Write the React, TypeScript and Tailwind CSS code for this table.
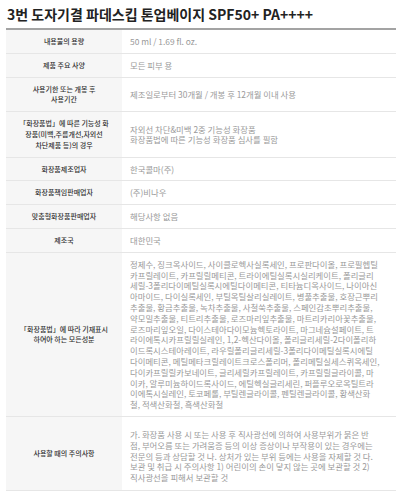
const rows: { label: string[]; value: string[]; tall?: boolean }[] = [
  { label: ["내용물의 용량"], value: ["50 ml / 1.69 fl. oz."] },
  { label: ["제품 주요 사양"], value: ["모든 피부 용"] },
  { label: ["사용기한 또는 개봉 후", "사용기간"], value: ["제조일로부터 30개월 / 개봉 후 12개월 이내 사용"] },
  {
    label: ["「화장품법」에 따른 기능성 화", "장품(미백,주름개선,자외선", "차단제품 등)의 경우"],
    value: ["자외선 차단&미백 2중 기능성 화장품", "화장품법에 따른 기능성 화장품 심사를 필함"],
  },
  { label: ["화장품제조업자"], value: ["한국콜마(주)"] },
  { label: ["화장품책임판매업자"], value: ["(주)비나우"] },
  { label: ["맞춤형화장품판매업자"], value: ["해당사항 없음"] },
  { label: ["제조국"], value: ["대한민국"] },
  {
    label: ["「화장품법」에 따라 기재표시", "하여야 하는 모든성분"],
    value: [
      "정제수, 징크옥사이드, 사이클로헥사실록세인, 프로판다이올, 프로필헵틸",
      "카프릴레이트, 카프릴릴메티콘, 트라이에틸실록시실리케이트, 폴리글리",
      "세릴-3폴리다이메틸실록시에틸다이메티콘, 티타늄디옥사이드, 나이아신",
      "아마이드, 다이실록세인, 부틸옥틸살리실레이트, 병풀추출물, 호장근뿌리",
      "추출물, 황금추출물, 녹차추출물, 사철쑥추출물, 스페인감초뿌리추출물,",
      "약모밀추출물, 티트리추출물, 로즈마리잎추출물, 마트리카리아꽃추출물,",
      "로즈마리잎오일, 다이스테아다이모늄헥토라이트, 마그네슘설페이트, 트",
      "라이에톡시카프릴릴실레인, 1,2-헥산다이올, 폴리글리세릴-2다이폴리하",
      "이드록시스테아레이트, 라우릴폴리글리세릴-3폴리다이메틸실록시에틸",
      "다이메티콘, 메틸메타크릴레이트크로스폴리머, 폴리메틸실세스퀴옥세인,",
      "다이카프릴릴카보네이트, 글리세릴카프릴레이트, 카프릴릴글라이콜, 마",
      "이카, 알루미늄하이드록사이드, 에틸헥실글리세린, 퍼플루오로옥틸트라",
      "이에톡시실레인, 토코페롤, 부틸렌글라이콜, 펜틸렌글라이콜, 황색산화",
      "철, 적색산화철, 흑색산화철",
    ],
  },
  {
    label: ["사용할 때의 주의사항"],
    value: [
      "가. 화장품 사용 시 또는 사용 후 직사광선에 의하여 사용부위가 붉은 반",
      "점, 부어오름 또는 가려움증 등의 이상 증상이나 부작용이 있는 경우에는",
      "전문의 등과 상담할 것 나. 상처가 있는 부위 등에는 사용을 자제할 것 다.",
      "보관 및 취급 시 주의사항 1) 어린이의 손이 닿지 않는 곳에 보관할 것 2)",
      "직사광선을 피해서 보관할 것",
    ],
    tall: true,
  },
];

export default function App() {
  return (
    <div
      className="w-[416px] h-[495px] overflow-hidden bg-white px-[6px]"
      style={{ fontFamily: '"Noto Sans CJK KR", "Noto Sans", sans-serif' }}
    >
      <h1 className="pl-px pt-[5px] pb-[5px] text-[14px] font-bold leading-[18px] text-[#222] whitespace-nowrap">
        3번 도자기결 파데스킵 톤업베이지 SPF50+ PA++++
      </h1>
      <div className="w-[390px] border-t-2 border-[#a3a3a3]">
        {rows.map((row, i) => (
          <div key={i} className="flex border-b border-[#e6e6e6]">
            <div className="flex w-[116px] shrink-0 flex-col items-center justify-center bg-[#f6f6f6] py-[6px] text-center text-[7px] font-medium leading-[10.8px] text-[#333]">
              {row.label.map((l, j) => (
                <div key={j} className="whitespace-nowrap">
                  {l}
                </div>
              ))}
            </div>
            <div
              className={
                row.tall
                  ? "flex flex-1 flex-col justify-center pl-[8px] pt-[12px] pb-[7px] text-[8.4px] leading-[10.8px] text-[#999]"
                  : "flex flex-1 flex-col justify-center pl-[8px] py-[6px] text-[8.4px] leading-[10.8px] text-[#999]"
              }
            >
              {row.value.map((v, j) => (
                <div key={j} className="whitespace-nowrap">
                  {v}
                </div>
              ))}
            </div>
          </div>
        ))}
      </div>
    </div>
  );
}
